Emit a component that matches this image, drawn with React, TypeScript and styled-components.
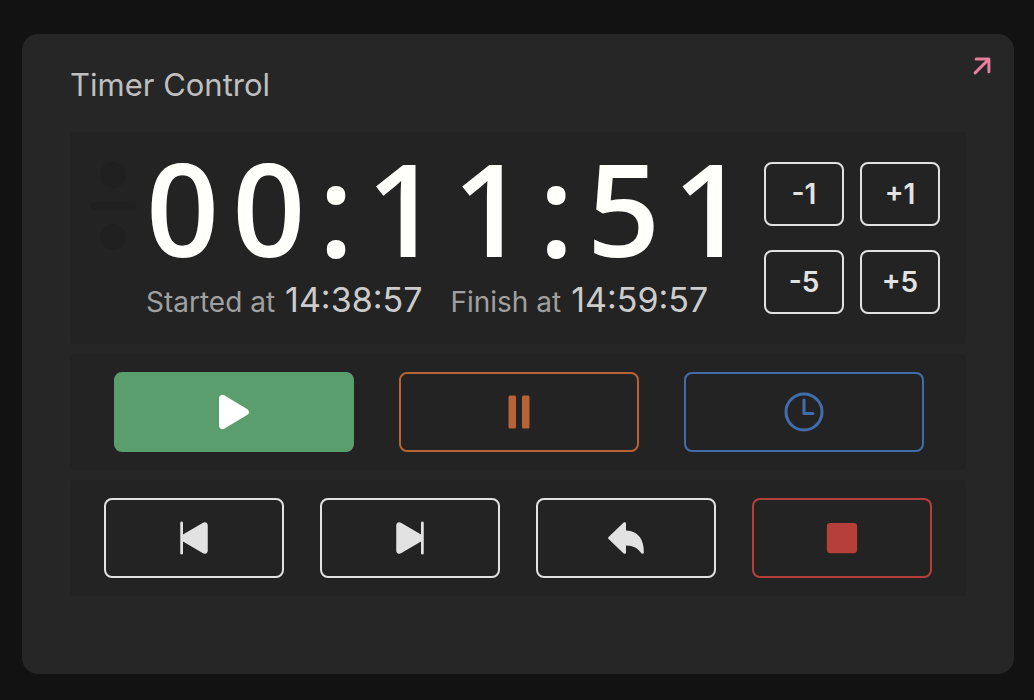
import React from 'react';
import styled, { createGlobalStyle } from 'styled-components';
import {
  IoArrowUndo,
  IoArrowUp,
  IoPause,
  IoPlay,
  IoPlaySkipBack,
  IoPlaySkipForward,
  IoStop,
  IoTimeOutline,
} from 'react-icons/io5';

const GlobalStyle = createGlobalStyle`
  * {
    box-sizing: border-box;
  }

  body {
    margin: 0;
    background: #121212;
    font-family: Inter, 'Open Sans', sans-serif;
  }
`;

const Page = styled.main`
  min-height: 100vh;
  padding: 34px 20px 26px 22px;
  display: flex;
`;

const Card = styled.section`
  position: relative;
  flex: 1;
  padding: 32px 48px 76px;
  border-radius: 16px;
  background: #262626;
`;

const Title = styled.h1`
  margin: 0 0 28px;
  font-size: 31px;
  line-height: 38px;
  font-weight: 400;
  color: #bfbfbf;
`;

const ExtractLink = styled.a`
  position: absolute;
  top: 16px;
  right: 16px;
  display: flex;
  color: #e67f9b;

  svg {
    transform: rotate(45deg);
  }
`;

const Panels = styled.div`
  display: flex;
  flex-direction: column;
  gap: 10px;
`;

const Panel = styled.div`
  border-radius: 4px;
  background: #232323;
`;

const TimerPanel = styled(Panel)`
  display: flex;
  align-items: flex-start;
  padding: 30px 26px 22px 20px;
`;

const Indicators = styled.div`
  display: flex;
  flex-direction: column;
  align-items: center;
  width: 46px;
  margin-right: 10px;
`;

const Dot = styled.span`
  width: 26px;
  height: 26px;
  border-radius: 50%;
  background: #202020;
`;

const Dash = styled.span`
  width: 46px;
  height: 8px;
  margin: 14px 0;
  border-radius: 4px;
  background: #202020;
`;

const Readout = styled.div`
  flex: 1;
  white-space: nowrap;
`;

const Clock = styled.div`
  font-family: 'Open Sans', sans-serif;
  font-size: 128px;
  line-height: 92px;
  font-weight: 600;
  letter-spacing: 13px;
  color: #fffffb;
`;

const Schedule = styled.div`
  display: flex;
  align-items: baseline;
  gap: 28px;
  margin-top: 26px;
  line-height: 40px;
`;

const ScheduleItem = styled.div`
  display: flex;
  align-items: baseline;
  gap: 10px;
  font-size: 28px;
  font-weight: 400;
  color: #a0a0a0;
`;

const ScheduleTime = styled.time`
  font-size: 34px;
  color: #cccccc;
`;

const AdjustGrid = styled.div`
  display: grid;
  grid-template-columns: 80px 80px;
  gap: 24px 16px;
`;

const Button = styled.button<{ $tone?: string; $filled?: boolean; $height?: number }>`
  display: flex;
  align-items: center;
  justify-content: center;
  width: 100%;
  height: ${({ $height = 80 }) => $height}px;
  padding: 0;
  border: 2px solid ${({ $tone = '#e2e2e2' }) => $tone};
  border-radius: 8px;
  background: ${({ $filled, $tone }) => ($filled ? $tone : 'transparent')};
  color: ${({ $filled, $tone = '#e2e2e2' }) => ($filled ? '#ffffff' : $tone)};
  font-family: inherit;
  font-size: 28px;
  font-weight: 600;
  cursor: pointer;
`;

const PlaybackPanel = styled(Panel)`
  display: grid;
  grid-template-columns: repeat(3, 1fr);
  gap: 45px;
  padding: 18px 42px 18px 44px;
`;

const TransportPanel = styled(Panel)`
  display: grid;
  grid-template-columns: repeat(4, 1fr);
  gap: 36px;
  padding: 18px 34px;
`;

export default function App() {
  return (
    <Page>
      <GlobalStyle />
      <Card>
        <Title>Timer Control</Title>
        <ExtractLink href="#timer" aria-label="Open in new window">
          <IoArrowUp size={32} />
        </ExtractLink>
        <Panels>
          <TimerPanel>
            <Indicators aria-hidden="true">
              <Dot />
              <Dash />
              <Dot />
            </Indicators>
            <Readout>
              <Clock role="timer">00:11:51</Clock>
              <Schedule>
                <ScheduleItem>
                  Started at <ScheduleTime>14:38:57</ScheduleTime>
                </ScheduleItem>
                <ScheduleItem>
                  Finish at <ScheduleTime>14:59:57</ScheduleTime>
                </ScheduleItem>
              </Schedule>
            </Readout>
            <AdjustGrid>
              <Button $height={64}>-1</Button>
              <Button $height={64}>+1</Button>
              <Button $height={64}>-5</Button>
              <Button $height={64}>+5</Button>
            </AdjustGrid>
          </TimerPanel>
          <PlaybackPanel>
            <Button $tone="#5a9e6e" $filled aria-label="Start">
              <IoPlay size={48} />
            </Button>
            <Button $tone="#b76335" aria-label="Pause">
              <IoPause size={48} />
            </Button>
            <Button $tone="#416dac" aria-label="Roll">
              <IoTimeOutline size={48} />
            </Button>
          </PlaybackPanel>
          <TransportPanel>
            <Button aria-label="Previous event">
              <IoPlaySkipBack size={44} />
            </Button>
            <Button aria-label="Next event">
              <IoPlaySkipForward size={44} />
            </Button>
            <Button aria-label="Reload event">
              <IoArrowUndo size={44} />
            </Button>
            <Button $tone="#b63f39" aria-label="Stop">
              <IoStop size={44} />
            </Button>
          </TransportPanel>
        </Panels>
      </Card>
    </Page>
  );
}
